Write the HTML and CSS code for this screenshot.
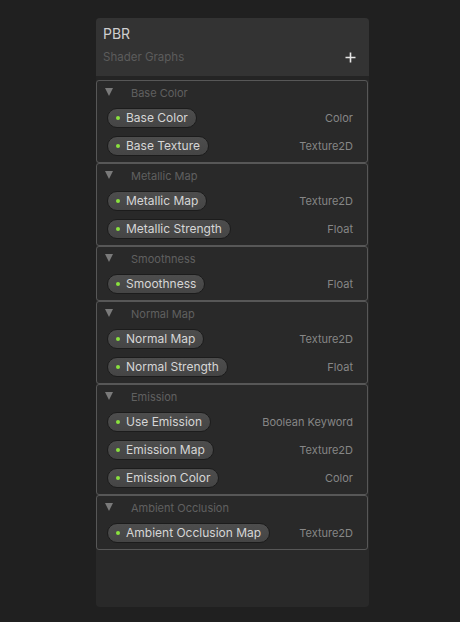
FILE: index.html
```html
<!DOCTYPE html>
<html>
<head>
<meta charset="utf-8">
<link rel="stylesheet" href="styles.css">
</head>
<body>
<div class="panel">
  <div class="header">
    <div class="title">PBR</div>
    <div class="subrow">
      <span class="subtitle">Shader Graphs</span>
      <svg class="plus" width="11" height="11" viewBox="0 0 11 11"><path d="M5.5 0.5v10M0.5 5.5h10" stroke="#e6e6e6" stroke-width="1.6"/></svg>
    </div>
  </div>
  <div class="sections">
    <div class="section">
      <div class="sec-title"><span class="tri"></span><span>Base Color</span></div>
      <div class="rows">
        <div class="row"><span class="pill"><i class="dot"></i>Base Color</span><span class="type">Color</span></div>
        <div class="row"><span class="pill"><i class="dot"></i>Base Texture</span><span class="type">Texture2D</span></div>
      </div>
    </div>
    <div class="section">
      <div class="sec-title"><span class="tri"></span><span>Metallic Map</span></div>
      <div class="rows">
        <div class="row"><span class="pill"><i class="dot"></i>Metallic Map</span><span class="type">Texture2D</span></div>
        <div class="row"><span class="pill"><i class="dot"></i>Metallic Strength</span><span class="type">Float</span></div>
      </div>
    </div>
    <div class="section">
      <div class="sec-title"><span class="tri"></span><span>Smoothness</span></div>
      <div class="rows">
        <div class="row"><span class="pill"><i class="dot"></i>Smoothness</span><span class="type">Float</span></div>
      </div>
    </div>
    <div class="section">
      <div class="sec-title"><span class="tri"></span><span>Normal Map</span></div>
      <div class="rows">
        <div class="row"><span class="pill"><i class="dot"></i>Normal Map</span><span class="type">Texture2D</span></div>
        <div class="row"><span class="pill"><i class="dot"></i>Normal Strength</span><span class="type">Float</span></div>
      </div>
    </div>
    <div class="section">
      <div class="sec-title"><span class="tri"></span><span>Emission</span></div>
      <div class="rows">
        <div class="row"><span class="pill"><i class="dot"></i>Use Emission</span><span class="type">Boolean Keyword</span></div>
        <div class="row"><span class="pill"><i class="dot"></i>Emission Map</span><span class="type">Texture2D</span></div>
        <div class="row"><span class="pill"><i class="dot"></i>Emission Color</span><span class="type">Color</span></div>
      </div>
    </div>
    <div class="section">
      <div class="sec-title"><span class="tri"></span><span>Ambient Occlusion</span></div>
      <div class="rows">
        <div class="row"><span class="pill"><i class="dot"></i>Ambient Occlusion Map</span><span class="type">Texture2D</span></div>
      </div>
    </div>
  </div>
</div>
</body>
</html>
```

FILE: styles.css
```css
html, body {
  margin: 0;
  padding: 0;
  background: #202020;
  font-family: Inter, "Liberation Sans", sans-serif;
}

.panel {
  margin: 18px 0 0 96px;
  width: 273px;
  height: 589px;
  background: #292929;
  border-radius: 4px;
  overflow: hidden;
  box-sizing: border-box;
}

.header {
  background: #333333;
  padding: 8px 7px 0 7px;
  box-sizing: border-box;
  border-bottom: 4px solid #242424;
  height: 62px;
}

.title {
  font-size: 14px;
  line-height: 16px;
  color: #cfcfcf;
}

.subrow {
  display: flex;
  justify-content: space-between;
  align-items: center;
  margin-top: 8px;
  padding-right: 6px;
}

.subtitle {
  font-size: 11.5px;
  line-height: 14px;
  color: #5c5c5c;
}

.plus {
  display: block;
}

.sections {
  width: 272px;
}

.section {
  border: 1px solid #575757;
  border-radius: 3px;
  padding-bottom: 6px;
}

.sec-title {
  height: 23px;
  display: flex;
  align-items: center;
  padding-left: 8px;
  font-size: 11px;
  color: #606060;
}

.tri {
  width: 0;
  height: 0;
  border-left: 4.5px solid transparent;
  border-right: 4.5px solid transparent;
  border-top: 8px solid #7a7a7a;
  margin-right: 18px;
  margin-top: -2px;
}

.rows {
  display: flex;
  flex-direction: column;
  gap: 8px;
  padding-top: 4px;
}

.row {
  display: flex;
  justify-content: space-between;
  align-items: center;
  height: 20px;
  padding: 0 14px 0 10px;
}

.pill {
  display: flex;
  align-items: center;
  height: 20px;
  box-sizing: border-box;
  border: 1px solid #1c1c1c;
  border-radius: 10px;
  background: linear-gradient(#4d4d4d, #454545);
  padding: 0 8px 1px 8px;
  font-size: 12px;
  color: #d6d6d6;
}

.dot {
  width: 4px;
  height: 4px;
  border-radius: 50%;
  background: #8ae23e;
  margin-right: 6px;
  margin-top: 1px;
}

.type {
  font-size: 11px;
  color: #868686;
}
```
